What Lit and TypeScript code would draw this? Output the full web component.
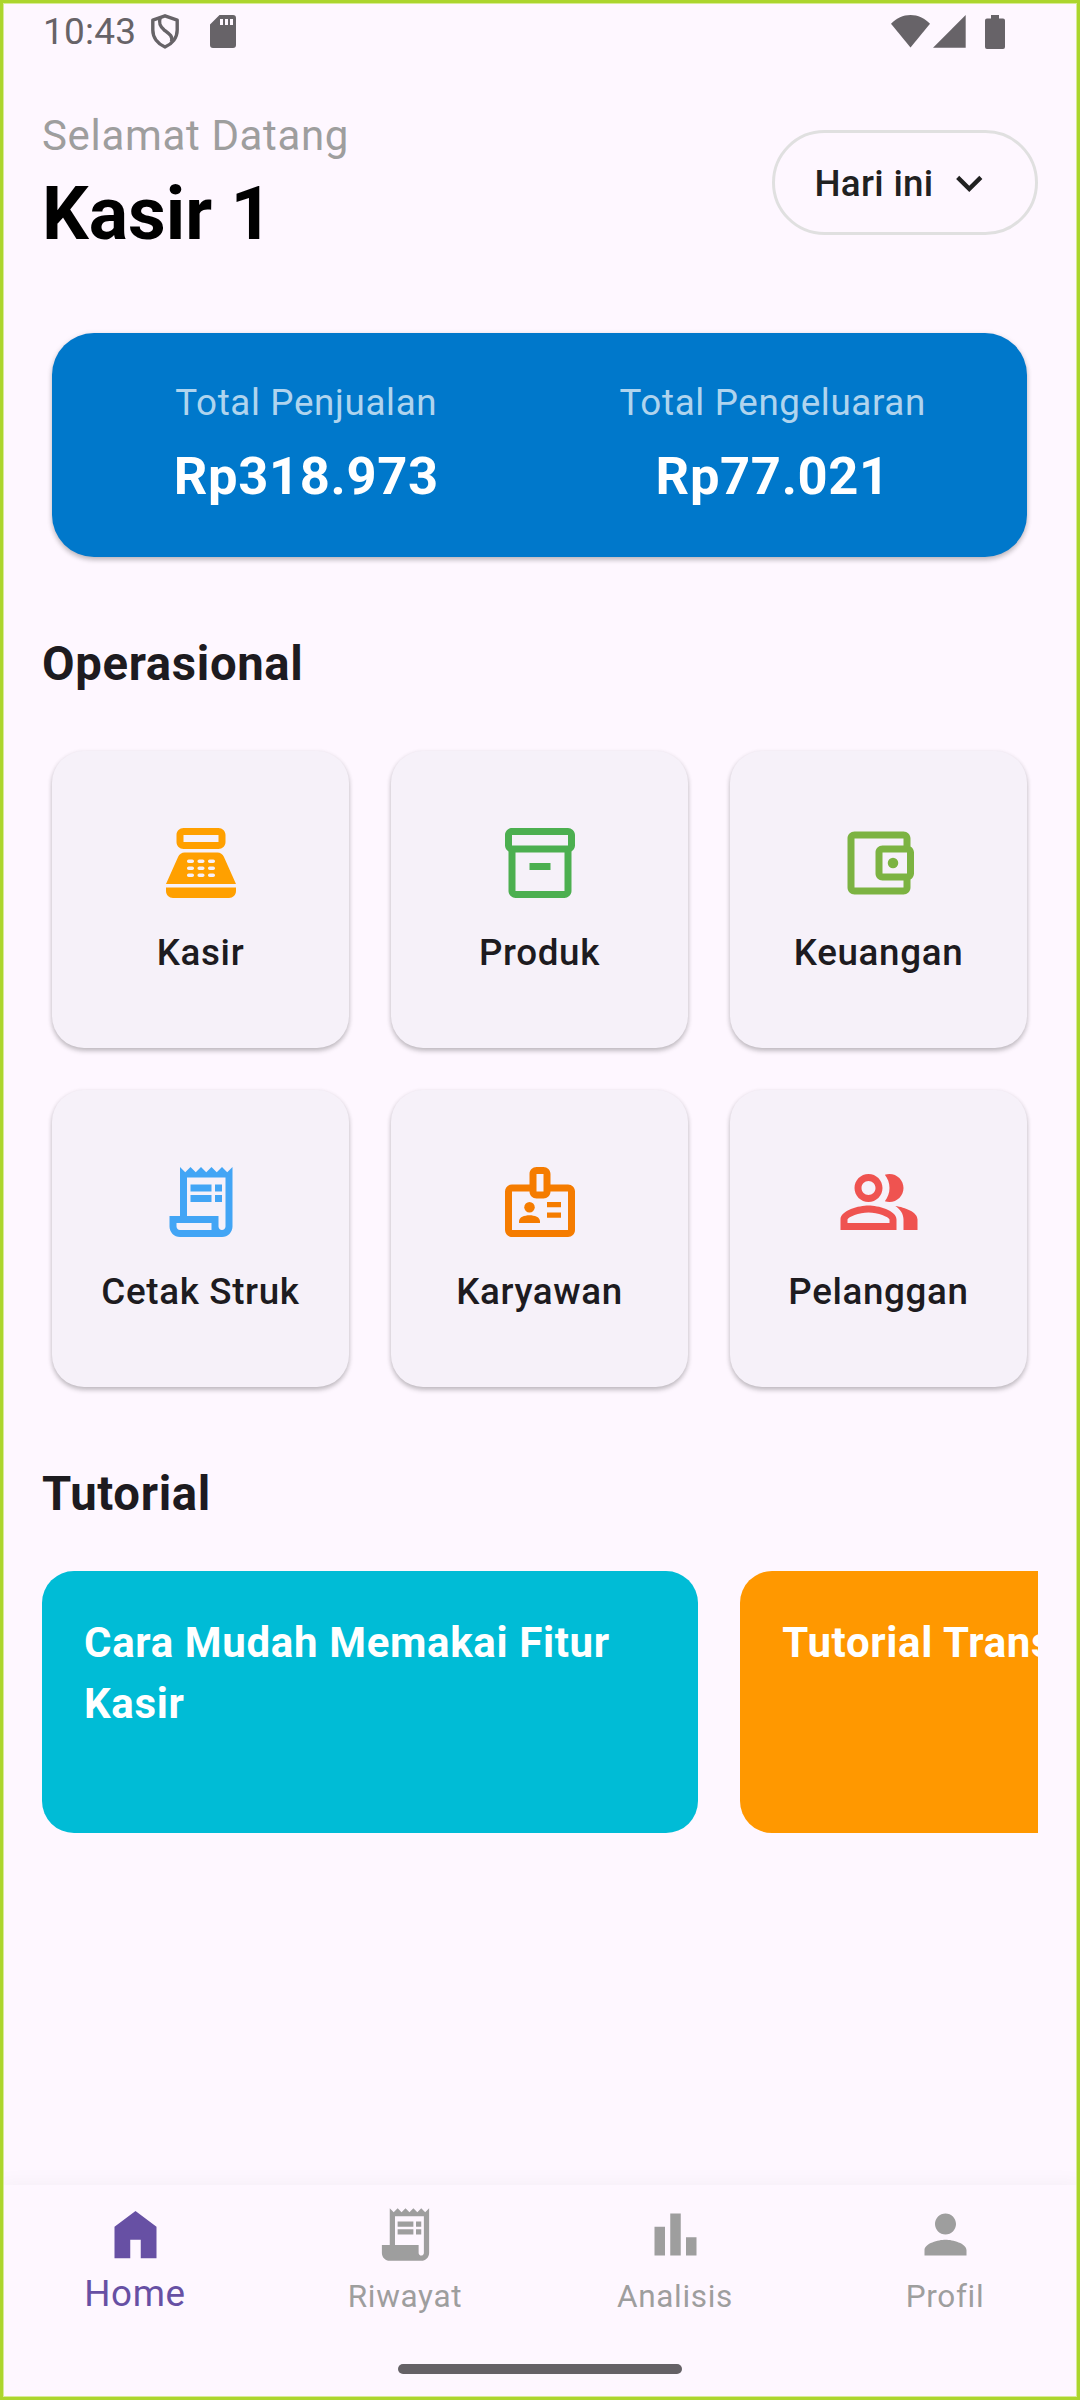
import { LitElement, html, svg, css, type TemplateResult } from "lit";
import { customElement, property } from "lit/decorators.js";
import { classMap } from "lit/directives/class-map.js";

const receiptEdge =
  "M19.5 3.5 18 2l-1.5 1.5L15 2l-1.5 1.5L12 2l-1.5 1.5L9 2 7.5 3.5 6 2v14H3v3c0 1.66 1.34 3 3 3h12c1.66 0 3-1.34 3-3V2l-1.5 1.5z";
const receiptLines = "M9 7h6v2H9zM16 7h2v2h-2zM9 10h6v2H9zM16 10h2v2h-2z";
const key = (x: number, y: number) =>
  `M${x + 1.5} ${y + 1}h-1c-.28 0-.5-.22-.5-.5s.22-.5.5-.5h1c.28 0 .5.22.5.5s-.22.5-.5.5z`;
const keys = [8, 11, 14].flatMap((x) => [11, 13, 15].map((y) => key(x, y))).join("");

const icons: Record<string, TemplateResult> = {
  register: svg`<path fill-rule="evenodd" d="M17 2H7c-1.1 0-2 .9-2 2v2c0 1.1.9 2 2 2h10c1.1 0 2-.9 2-2V4c0-1.1-.9-2-2-2zm0 4H7V4h10v2zM20 22H4c-1.1 0-2-.9-2-2v-1h20v1c0 1.1-.9 2-2 2z"/><path fill-rule="evenodd" d="${"M18.53 10.19C18.21 9.47 17.49 9 16.7 9H7.3c-.79 0-1.51.47-1.83 1.19L2 18h20l-3.47-7.81z" + keys}"/>`,
  box: svg`<path d="M20 2H4c-1 0-2 .9-2 2v3.01c0 .72.43 1.34 1 1.69V20c0 1.1 1.1 2 2 2h14c.9 0 2-.9 2-2V8.7c.57-.35 1-.97 1-1.69V4c0-1.1-1-2-2-2zm-1 18H5V9h14v11zm1-13H4V4h16v3z"/><path d="M9 12h6v2H9z"/>`,
  wallet: svg`<path d="M21 7.28V5c0-1.1-.9-2-2-2H5c-1.11 0-2 .9-2 2v14c0 1.1.89 2 2 2h14c1.1 0 2-.9 2-2v-2.28c.59-.35 1-.98 1-1.72V9c0-.74-.41-1.37-1-1.72zM20 9v6h-7V9h7zM5 19V5h14v2h-6c-1.1 0-2 .9-2 2v6c0 1.1.9 2 2 2h6v2H5z"/><circle cx="16" cy="12" r="1.5"/>`,
  receipt: svg`<path fill-rule="evenodd" d="${receiptEdge + "M15 20H6c-.55 0-1-.45-1-1v-1h10v2zM19 19c0 .55-.45 1-1 1s-1-.45-1-1v-3H8V5h11v14z"}"/><path d=${receiptLines}/>`,
  receiptFilled: svg`<path fill-rule="evenodd" d="${receiptEdge + "M19 19c0 .55-.45 1-1 1s-1-.45-1-1v-3H8V5h11v14z"}"/><path d=${receiptLines}/>`,
  badge: svg`<path fill-rule="evenodd" d="M20 7h-5V4c0-1.1-.9-2-2-2h-2c-1.1 0-2 .9-2 2v3H4c-1.1 0-2 .9-2 2v11c0 1.1.9 2 2 2h16c1.1 0 2-.9 2-2V9c0-1.1-.9-2-2-2zM11 4h2v5h-2V4zM20 20H4V9h5c0 1.1.9 2 2 2h2c1.1 0 2-.9 2-2h5v11z"/><circle cx="9" cy="13.5" r="1.5"/><path d="M11.08 16.18C10.44 15.9 9.74 15.75 9 15.75s-1.44.15-2.08.43C6.36 16.42 6 16.96 6 17.57V18h6v-.43c0-.61-.36-1.15-.92-1.39zM14 12h4v1.5h-4zM14 15h4v1.5h-4z"/>`,
  people: svg`<path d="M16.67 13.13C18.04 14.06 19 15.32 19 17v3h4v-3c0-2.18-3.57-3.47-6.33-3.87zM15 12c2.21 0 4-1.79 4-4s-1.79-4-4-4c-.47 0-.91.1-1.33.24C14.5 5.27 15 6.58 15 8s-.5 2.73-1.33 3.76c.42.14.86.24 1.33.24zM9 12c2.21 0 4-1.79 4-4s-1.79-4-4-4-4 1.79-4 4 1.79 4 4 4zm0-6c1.1 0 2 .9 2 2s-.9 2-2 2-2-.9-2-2 .9-2 2-2zM9 13c-2.67 0-8 1.34-8 4v3h16v-3c0-2.66-5.33-4-8-4zm6 5H3v-.99C3.2 16.29 6.3 15 9 15s5.8 1.29 6 2v1z"/>`,
  home: svg`<path d="M4 21V9l8-6 8 6v12h-6v-7h-4v7z"/>`,
  chart: svg`<path d="M4 9h4v11H4zM16 13h4v7h-4zM10 4h4v16h-4z"/>`,
  person: svg`<path d="M12 12c2.21 0 4-1.79 4-4s-1.79-4-4-4-4 1.79-4 4 1.79 4 4 4zm0 2c-2.67 0-8 1.34-8 4v2h16v-2c0-2.66-5.33-4-8-4z"/>`,
  chevron: svg`<path d="M7.41 8.59 12 13.17l4.59-4.58L18 10l-6 6-6-6z"/>`,
};

@customElement("md-icon")
class MdIcon extends LitElement {
  static styles = css`
    :host { display: block; flex: none; }
    .glyph { display: block; width: 100%; height: 100%; fill: currentColor; }
  `;
  @property() name = "";
  render() {
    return html`<svg class="glyph" viewBox="0 0 24 24">${icons[this.name]}</svg>`;
  }
}

@customElement("status-bar")
class StatusBar extends LitElement {
  static styles = css`
    :host { display: block; }
    .bar { display: flex; align-items: center; height: 63px; padding: 0 75px 0 43px; color: #676368; }
    .time { font-size: 37px; line-height: 44px; width: 107px; white-space: nowrap; letter-spacing: 0.2px; }
    .sys { display: block; fill: currentColor; flex: none; }
    .line { fill: none; stroke: currentColor; stroke-width: 3.4; stroke-linejoin: round; }
    .sd { margin-left: 30px; }
    .spacer { flex: 1; }
    .signal { margin-left: 3px; }
    .battery { margin-left: 19px; }
  `;
  render() {
    return html`<div class="bar">
      <span class="time">10:43</span>
      <svg class="sys" width="30" height="35" viewBox="0 0 30 35">
        <path class="line" d="M15 1.8 2.8 6.2V16c0 7.6 5 13.8 12.2 17 7.2-3.2 12.2-9.4 12.2-17V6.2z" />
        <path class="line" d="M10.2 3.8C8.6 9 9.6 12 14 15.8 19 19.6 23.2 22 21.400 27.8" />
      </svg>
      <svg class="sys sd" width="26" height="33" viewBox="0 0 26 33">
        <path fill-rule="evenodd" d="M9.5 0H23a3 3 0 0 1 3 3v27a3 3 0 0 1-3 3H3a3 3 0 0 1-3-3V9.500zM10 4v6h3V4zM15 4v6h3V4zM20 4v6h3V4z" />
      </svg>
      <span class="spacer"></span>
      <svg class="sys" width="39" height="33" viewBox="0 0 39 33">
        <path d="M0 8.8C5.6 3 12 0 19.5 0S33.4 3 39 8.8L19.5 32.5z" />
      </svg>
      <svg class="sys signal" width="33" height="33" viewBox="0 0 33 33"><path d="M0 32.7 32.7 0v32.7z" /></svg>
      <svg class="sys battery" width="20" height="34" viewBox="0 0 20 34">
        <path d="M6 0h8v3.5h4a2 2 0 0 1 2 2V32a2 2 0 0 1-2 2H2a2 2 0 0 1-2-2V5.500a2 2 0 0 1 2-2h4z" />
      </svg>
    </div>`;
  }
}

const totals = [
  { label: "Total Penjualan", value: "Rp318.973" },
  { label: "Total Pengeluaran", value: "Rp77.021" },
];

const menus = [
  { label: "Kasir", icon: "register", tone: "amber" },
  { label: "Produk", icon: "box", tone: "green" },
  { label: "Keuangan", icon: "wallet", tone: "lime" },
  { label: "Cetak Struk", icon: "receipt", tone: "blue" },
  { label: "Karyawan", icon: "badge", tone: "orange" },
  { label: "Pelanggan", icon: "people", tone: "red" },
];

const tutorials = [
  { title: "Cara Mudah Memakai Fitur Kasir", tone: "cyan" },
  { title: "Tutorial Transaksi", tone: "deep" },
];

const tabs = [
  { label: "Home", icon: "home" },
  { label: "Riwayat", icon: "receiptFilled" },
  { label: "Analisis", icon: "chart" },
  { label: "Profil", icon: "person" },
];

@customElement("app-root")
class AppRoot extends LitElement {
  static styles = css`
    :host {
      display: block;
      width: 1080px;
      height: 2400px;
      font-family: Roboto, "Liberation Sans", sans-serif;
      color: #1d1b20;
      background: #fef7ff;
    }
    .screen { position: relative; display: flex; flex-direction: column; height: 2400px; overflow: hidden; letter-spacing: 0.66px; }
    .frame { position: absolute; inset: 0; border: 3px solid #acd52e; box-shadow: inset 0 0 0 1px #d8eb98; pointer-events: none; }
    .body { flex: 1; padding: 0 42px; }
    .header { display: flex; justify-content: space-between; align-items: flex-start; padding-top: 43px; }
    .hello { font-size: 42px; line-height: 60px; color: #9e9e9e; }
    .name { font-size: 73.5px; line-height: 96px; font-weight: 700; color: #000; letter-spacing: 0; }
    .range {
      display: flex; align-items: center; justify-content: space-between; box-sizing: border-box;
      width: 266px; height: 105px; margin-top: 24px; padding: 1px 39.5px 0;
      border: 3px solid #e0e0e0; border-radius: 53px;
      font-size: 36.75px; font-weight: 500; color: #212121; letter-spacing: 0.3px;
    }
    .chevron { width: 52.5px; height: 52.5px; }
    .summary {
      display: flex; box-sizing: border-box; height: 224px; margin: 71px 11px 0 10px; padding: 43.5px 21px 0;
      border-radius: 42px; background: #0078cb; text-align: center;
      box-shadow: 0 3px 5px rgba(0, 0, 0, 0.22), 0 1px 6px rgba(0, 0, 0, 0.08);
    }
    .total { flex: 1; display: flex; flex-direction: column; gap: 9.5px; }
    .total-label { font-size: 36.75px; line-height: 52px; color: rgba(255, 255, 255, 0.7); }
    .total-value { font-size: 52.5px; line-height: 76px; font-weight: 700; color: #fff; }
    .section { margin: 73px 0 0; font-size: 47.25px; line-height: 68px; font-weight: 700; }
    .grid { display: grid; grid-template-columns: repeat(3, 297px); gap: 42px; padding: 53px 10px 0; }
    .card {
      display: flex; flex-direction: column; align-items: center; gap: 21.5px; box-sizing: border-box;
      height: 297px; padding-top: 70px; border-radius: 32px; background: #f6f1f9;
      box-shadow: 0 3px 5px rgba(0, 0, 0, 0.22), 0 1px 5px rgba(0, 0, 0, 0.07);
    }
    .card-icon { width: 84px; height: 84px; }
    .card-label { font-size: 36.75px; line-height: 52px; font-weight: 500; white-space: nowrap; }
    .amber { color: #ffa000; }
    .green { color: #4caf50; }
    .lime { color: #7cb342; }
    .blue { color: #42a5f5; }
    .orange { color: #f57c00; }
    .red { color: #ef5350; }
    .tutorials { display: flex; gap: 42px; margin-top: 43px; overflow: hidden; }
    .tutorial {
      flex: none; box-sizing: border-box; width: 656.25px; height: 262px; padding: 41px 42px;
      border-radius: 32px; color: #fff; font-size: 42px; line-height: 61px; font-weight: 700;
    }
    .cyan { background: #00bcd6; }
    .deep { background: #ff9800; }
    .nav { display: flex; flex-direction: column; align-items: center; height: 215px; background: #fef7ff; box-shadow: 0 -3px 18px rgba(0, 0, 0, 0.035); }
    .tabs { display: flex; width: 100%; height: 179px; }
    .tab { flex: 1; display: flex; flex-direction: column; align-items: center; padding-top: 18px; color: #9e9e9e; }
    .tab-icon { width: 63px; height: 63px; }
    .tab-label { margin-top: 9px; font-size: 31.5px; line-height: 44px; }
    .active { color: #6750a4; }
    .active .tab-label { margin-top: 2px; font-size: 36.75px; line-height: 52px; }
    .gesture { width: 284px; height: 10px; border-radius: 5px; background: #656166; }
  `;

  render() {
    return html`<div class="screen">
      <status-bar></status-bar>
      <main class="body">
        <header class="header">
          <div>
            <div class="hello">Selamat Datang</div>
            <div class="name">Kasir 1</div>
          </div>
          <div class="range"><span>Hari ini</span><md-icon class="chevron" name="chevron"></md-icon></div>
        </header>
        <section class="summary">
          ${totals.map((t) => html`<div class="total">
            <div class="total-label">${t.label}</div>
            <div class="total-value">${t.value}</div>
          </div>`)}
        </section>
        <h2 class="section">Operasional</h2>
        <div class="grid">
          ${menus.map((m) => html`<div class="card">
            <md-icon class="card-icon ${m.tone}" name=${m.icon}></md-icon>
            <div class="card-label">${m.label}</div>
          </div>`)}
        </div>
        <h2 class="section">Tutorial</h2>
        <div class="tutorials">
          ${tutorials.map((t) => html`<div class="tutorial ${t.tone}">${t.title}</div>`)}
        </div>
      </main>
      <nav class="nav">
        <div class="tabs">
          ${tabs.map((t, i) => html`<div class=${classMap({ tab: true, active: i === 0 })}>
            <md-icon class="tab-icon" name=${t.icon}></md-icon>
            <div class="tab-label">${t.label}</div>
          </div>`)}
        </div>
        <div class="gesture"></div>
      </nav>
      <div class="frame"></div>
    </div>`;
  }
}
